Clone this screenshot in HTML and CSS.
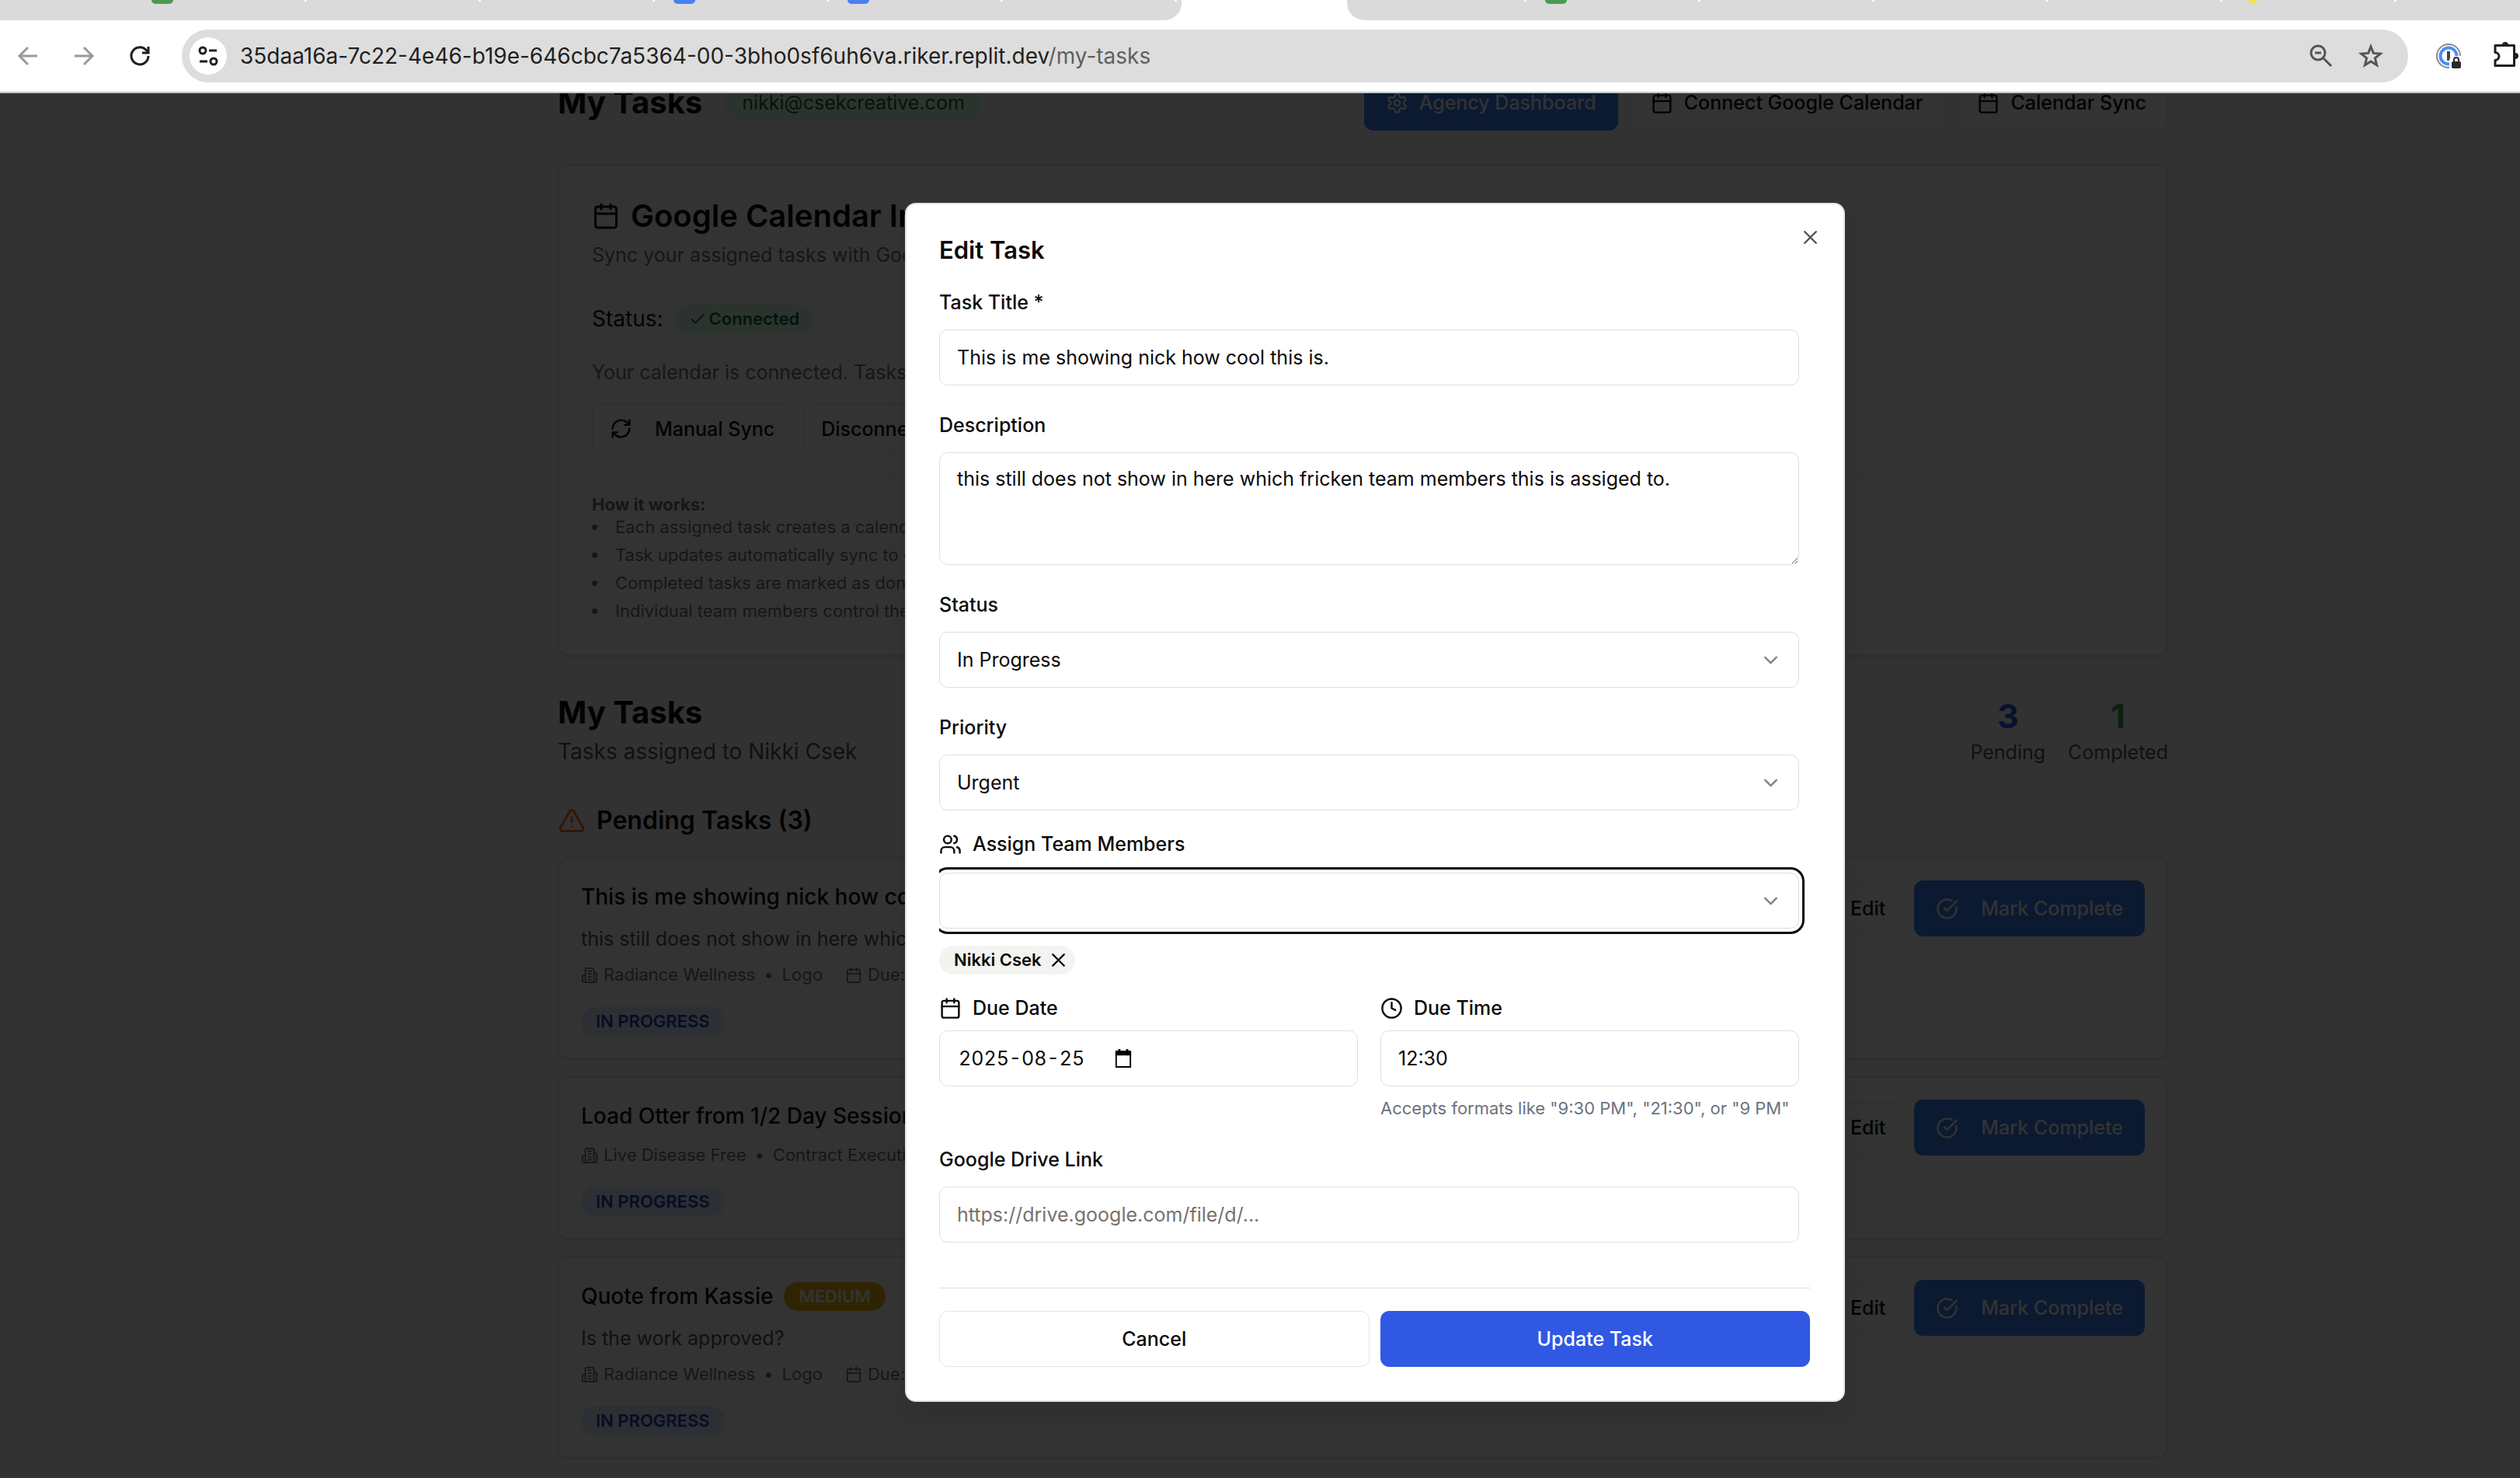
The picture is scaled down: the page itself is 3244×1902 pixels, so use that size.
FILE: index.html
```html
<!DOCTYPE html>
<html lang="en">
<head>
<meta charset="utf-8">
<title>My Tasks</title>
<link rel="stylesheet" href="styles.css">
</head>
<body>
<svg class="sprite" aria-hidden="true">
  <symbol id="calendar" viewBox="0 0 24 24"><path d="M8 2v4M16 2v4M3 10h18"/><rect x="3" y="4" width="18" height="18" rx="2"/></symbol>
  <symbol id="gear" viewBox="0 0 24 24"><path d="M12.22 2h-.44a2 2 0 0 0-2 2v.18a2 2 0 0 1-1 1.73l-.43.25a2 2 0 0 1-2 0l-.15-.08a2 2 0 0 0-2.73.73l-.22.38a2 2 0 0 0 .73 2.73l.15.1a2 2 0 0 1 1 1.72v.51a2 2 0 0 1-1 1.74l-.15.09a2 2 0 0 0-.73 2.73l.22.38a2 2 0 0 0 2.73.73l.15-.08a2 2 0 0 1 2 0l.43.25a2 2 0 0 1 1 1.73V20a2 2 0 0 0 2 2h.44a2 2 0 0 0 2-2v-.18a2 2 0 0 1 1-1.73l.43-.25a2 2 0 0 1 2 0l.15.08a2 2 0 0 0 2.73-.73l.22-.39a2 2 0 0 0-.73-2.73l-.15-.08a2 2 0 0 1-1-1.74v-.5a2 2 0 0 1 1-1.74l.15-.09a2 2 0 0 0 .73-2.73l-.22-.38a2 2 0 0 0-2.73-.73l-.15.08a2 2 0 0 1-2 0l-.43-.25a2 2 0 0 1-1-1.73V4a2 2 0 0 0-2-2z"/><circle cx="12" cy="12" r="3"/></symbol>
  <symbol id="check" viewBox="0 0 24 24"><path d="M20 6 9 17l-5-5"/></symbol>
  <symbol id="refresh" viewBox="0 0 24 24"><path d="M3 12a9 9 0 0 1 9-9 9.75 9.75 0 0 1 6.74 2.74L21 8M21 3v5h-5M21 12a9 9 0 0 1-9 9 9.75 9.75 0 0 1-6.74-2.74L3 16M8 16H3v5"/></symbol>
  <symbol id="alert" viewBox="0 0 24 24"><path d="m21.73 18-8-14a2 2 0 0 0-3.48 0l-8 14A2 2 0 0 0 4 21h16a2 2 0 0 0 1.73-3M12 9v4M12 17h.01"/></symbol>
  <symbol id="building" viewBox="0 0 24 24"><path d="M6 22V4a2 2 0 0 1 2-2h8a2 2 0 0 1 2 2v18ZM6 12H4a2 2 0 0 0-2 2v6a2 2 0 0 0 2 2h2M18 9h2a2 2 0 0 1 2 2v9a2 2 0 0 1-2 2h-2M10 6h4M10 10h4M10 14h4M10 18h4"/></symbol>
  <symbol id="circle-check" viewBox="0 0 24 24"><path d="M21.801 10A10 10 0 1 1 17 3.335"/><path d="m9 11 3 3L22 4"/></symbol>
  <symbol id="close" viewBox="0 0 24 24"><path d="M18 6 6 18M6 6l12 12"/></symbol>
  <symbol id="chevron" viewBox="0 0 24 24"><path d="m6 9 6 6 6-6"/></symbol>
  <symbol id="users" viewBox="0 0 24 24"><path d="M16 21v-2a4 4 0 0 0-4-4H6a4 4 0 0 0-4 4v2"/><circle cx="9" cy="7" r="4"/><path d="M22 21v-2a4 4 0 0 0-3-3.87M16 3.13a4 4 0 0 1 0 7.75"/></symbol>
  <symbol id="clock" viewBox="0 0 24 24"><circle cx="12" cy="12" r="10"/><path d="M12 6v6l4 2"/></symbol>
</svg>

<header class="browser">
  <div class="tabs">
    <div class="tab-group tab-group-left">
      <span class="fav fav-green"></span><span class="fav"></span><span class="fav"></span><span class="fav fav-blue"></span><span class="fav fav-blue"></span><span class="fav"></span>
    </div>
    <div class="tab-active"></div>
    <div class="tab-group tab-group-right">
      <span class="fav"></span><span class="fav fav-green"></span><span class="fav"></span><span class="fav"></span><span class="fav"></span><span class="fav fav-yellow"></span><span class="fav"></span>
    </div>
  </div>
  <nav class="toolbar" aria-label="Browser">
    <button class="tool tool-muted" type="button" aria-label="Back"><svg class="tool-icon" viewBox="0 0 32 32"><path d="M28 16H5M16 5 5 16l11 11"/></svg></button>
    <button class="tool tool-muted" type="button" aria-label="Forward"><svg class="tool-icon" viewBox="0 0 32 32"><path d="M4 16h23M16 5l11 11-11 11"/></svg></button>
    <button class="tool" type="button" aria-label="Reload"><svg class="tool-icon" viewBox="0 0 32 32"><path d="M27 16a11 11 0 1 1-3-7.700L27 11M27 4v8h-8"/></svg></button>
    <div class="address">
      <button class="site-info" type="button" aria-label="Site information"><svg class="tool-icon" viewBox="0 0 32 32"><circle cx="9" cy="9" r="4"/><path d="M17 9h10M5 23h10"/><circle cx="23" cy="23" r="4"/></svg></button>
      <span class="url">35daa16a-7c22-4e46-b19e-646cbc7a5364-00-3bho0sf6uh6va.riker.replit.dev<span class="path">/my-tasks</span></span>
      <button class="tool tool-grey" type="button" aria-label="Zoom"><svg class="tool-icon" viewBox="0 0 32 32"><circle cx="12" cy="12" r="9"/><path d="m19 19 10 10M8 12h8"/></svg></button>
      <button class="tool tool-grey" type="button" aria-label="Bookmark"><svg class="tool-icon" viewBox="0 0 32 32"><path d="m16 4 3.300 8.400 9 .7-6.900 5.800 2.200 8.800-7.600-4.800-7.600 4.800 2.200-8.800-6.900-5.800 9-.7z"/></svg></button>
    </div>
    <button class="tool tool-ext" type="button" aria-label="Password manager"><svg class="ext-icon" viewBox="0 0 36 36"><circle cx="18" cy="18" r="15" fill="#fff" stroke="#8b8b8b" stroke-width="2"/><circle cx="18" cy="18" r="10.500" fill="none" stroke="#4a90f5" stroke-width="4"/><path d="M18 12v12" stroke="#444" stroke-width="4"/><path d="M19 36V24a6 6 0 0 1 6-6h11v18z" fill="#fff"/><rect x="22" y="25" width="12" height="9" rx="2" fill="#2a2a2a"/><path d="M25 26v-3a3 3 0 0 1 6 0v3" fill="none" stroke="#2a2a2a" stroke-width="2"/></svg></button>
    <button class="tool tool-ext tool-cut" type="button" aria-label="Extensions"><svg class="ext-icon" viewBox="0 0 36 36"><path d="M4 4.500h24.500v26H4v-7a5 5 0 0 0 0-10z" fill="none" stroke="#1f1f1f" stroke-width="3" stroke-linejoin="round"/><path d="M13 4a4 4 0 0 1 8 0zM30 14a4 4 0 0 1 0 8z" fill="#1f1f1f"/></svg></button>
  </nav>
</header>

<div class="viewport">
  <main class="page">
    <div class="container">
      <div class="page-head">
        <h1 class="heading">My Tasks</h1>
        <span class="email">nikki@csekcreative.com</span>
        <div class="head-actions">
          <button class="btn btn-blue" type="button"><svg class="icon"><use href="#gear"/></svg>Agency Dashboard</button>
          <button class="btn" type="button"><svg class="icon"><use href="#calendar"/></svg>Connect Google Calendar</button>
          <button class="btn" type="button"><svg class="icon"><use href="#calendar"/></svg>Calendar Sync</button>
        </div>
      </div>

      <section class="card sync">
        <h2 class="sync-title"><svg class="icon icon-lg"><use href="#calendar"/></svg>Google Calendar Integration</h2>
        <p class="muted sync-sub">Sync your assigned tasks with Google Calendar</p>
        <div class="status">Status: <span class="badge badge-green"><svg class="icon icon-sm"><use href="#check"/></svg>Connected</span></div>
        <p class="muted sync-note">Your calendar is connected. Tasks sync automatically.</p>
        <div class="sync-actions">
          <button class="btn btn-sm btn-wide" type="button"><svg class="icon"><use href="#refresh"/></svg>Manual Sync</button>
          <button class="btn btn-sm" type="button">Disconnect</button>
        </div>
        <div class="how">
          <p class="how-title">How it works:</p>
          <ul class="how-list">
            <li>Each assigned task creates a calendar event</li>
            <li>Task updates automatically sync to calendar</li>
            <li>Completed tasks are marked as done</li>
            <li>Individual team members control their sync</li>
          </ul>
        </div>
      </section>

      <div class="summary">
        <div>
          <h2 class="heading">My Tasks</h2>
          <p class="summary-sub">Tasks assigned to Nikki Csek</p>
        </div>
        <div class="stats">
          <div class="stat"><strong class="stat-num stat-blue">3</strong><span>Pending</span></div>
          <div class="stat"><strong class="stat-num stat-green">1</strong><span>Completed</span></div>
        </div>
      </div>

      <h3 class="pending"><svg class="icon icon-lg icon-orange"><use href="#alert"/></svg>Pending Tasks (3)</h3>

      <div class="tasks">
        <article class="card task">
          <div class="task-body">
            <h4 class="task-title">This is me showing nick how cool this is.</h4>
            <p class="task-desc">this still does not show in here which fricken team</p>
            <p class="meta"><svg class="icon icon-sm"><use href="#building"/></svg>Radiance Wellness<span class="dot">•</span>Logo<svg class="icon icon-sm meta-due"><use href="#calendar"/></svg>Due:</p>
            <span class="badge badge-blue">IN PROGRESS</span>
          </div>
          <div class="task-actions">
            <button class="btn btn-sm" type="button">Edit</button>
            <button class="btn btn-blue btn-wide" type="button"><svg class="icon"><use href="#circle-check"/></svg>Mark Complete</button>
          </div>
        </article>
        <article class="card task">
          <div class="task-body">
            <h4 class="task-title">Load Otter from 1/2 Day Session</h4>
            <p class="meta"><svg class="icon icon-sm"><use href="#building"/></svg>Live Disease Free<span class="dot">•</span>Contract Execution</p>
            <span class="badge badge-blue">IN PROGRESS</span>
          </div>
          <div class="task-actions">
            <button class="btn btn-sm" type="button">Edit</button>
            <button class="btn btn-blue btn-wide" type="button"><svg class="icon"><use href="#circle-check"/></svg>Mark Complete</button>
          </div>
        </article>
        <article class="card task">
          <div class="task-body">
            <h4 class="task-title">Quote from Kassie<span class="badge badge-yellow">MEDIUM</span></h4>
            <p class="task-desc">Is the work approved?</p>
            <p class="meta"><svg class="icon icon-sm"><use href="#building"/></svg>Radiance Wellness<span class="dot">•</span>Logo<svg class="icon icon-sm meta-due"><use href="#calendar"/></svg>Due:</p>
            <span class="badge badge-blue">IN PROGRESS</span>
          </div>
          <div class="task-actions">
            <button class="btn btn-sm" type="button">Edit</button>
            <button class="btn btn-blue btn-wide" type="button"><svg class="icon"><use href="#circle-check"/></svg>Mark Complete</button>
          </div>
        </article>
      </div>
    </div>
  </main>

  <div class="overlay">
    <div class="modal" role="dialog" aria-labelledby="dialog-title">
      <button class="modal-close" type="button" aria-label="Close"><svg class="icon"><use href="#close"/></svg></button>
      <h2 class="modal-title" id="dialog-title">Edit Task</h2>
      <form class="form">
        <div class="fields">
          <div class="field">
            <label class="label" for="title">Task Title *</label>
            <input class="control" id="title" type="text" value="This is me showing nick how cool this is.">
          </div>
          <div class="field">
            <label class="label" for="desc">Description</label>
            <textarea class="control control-area" id="desc">this still does not show in here which fricken team members this is assiged to.</textarea>
          </div>
          <div class="field">
            <label class="label" for="status">Status</label>
            <div class="picker"><select class="control" id="status"><option>In Progress</option></select><svg class="icon picker-icon"><use href="#chevron"/></svg></div>
          </div>
          <div class="field">
            <label class="label" for="priority">Priority</label>
            <div class="picker"><select class="control" id="priority"><option>Urgent</option></select><svg class="icon picker-icon"><use href="#chevron"/></svg></div>
          </div>
          <div class="field field-team">
            <label class="label label-icon" for="team"><svg class="icon"><use href="#users"/></svg>Assign Team Members</label>
            <div class="picker"><select class="control control-focus" id="team"><option></option></select><svg class="icon picker-icon"><use href="#chevron"/></svg></div>
            <span class="chip">Nikki Csek<button class="chip-remove" type="button" aria-label="Remove Nikki Csek"><svg class="icon"><use href="#close"/></svg></button></span>
          </div>
          <div class="due">
            <div class="field">
              <label class="label label-icon" for="date"><svg class="icon"><use href="#calendar"/></svg>Due Date</label>
              <div class="control date-box"><input class="date-input" id="date" type="text" value="2025-08-25"><button class="date-button" type="button" aria-label="Open calendar"><svg class="date-icon" viewBox="0 0 24 26"><path d="M2 3h20v22H2z" fill="none" stroke="#000" stroke-width="2"/><path d="M1 3h22v6H1zM5 0h3v4H5zM16 0h3v4h-3z"/></svg></button></div>
            </div>
            <div class="field">
              <label class="label label-icon" for="time"><svg class="icon"><use href="#clock"/></svg>Due Time</label>
              <input class="control" id="time" type="text" value="12:30">
              <p class="hint">Accepts formats like "9:30 PM", "21:30", or "9 PM"</p>
            </div>
          </div>
          <div class="field">
            <label class="label" for="drive">Google Drive Link</label>
            <input class="control" id="drive" type="url" placeholder="https://drive.google.com/file/d/...">
          </div>
        </div>
        <div class="modal-foot">
          <button class="btn btn-grow" type="button">Cancel</button>
          <button class="btn btn-primary btn-grow" type="submit">Update Task</button>
        </div>
      </form>
    </div>
  </div>
</div>
</body>
</html>
```
FILE: styles.css
```css
* { box-sizing: border-box; }

body {
  margin: 0;
  height: 100vh;
  display: flex;
  flex-direction: column;
  overflow: hidden;
  background: #fafaf9;
  color: #0c0a09;
  font: 400 25px/36px Inter, "Liberation Sans", sans-serif;
}

h1, h2, h3, h4, p, ul { margin: 0; padding: 0; }
button, input, select, textarea { font: inherit; color: inherit; }
button { cursor: pointer; }

.sprite { display: none; }

.icon {
  width: 29px;
  height: 29px;
  flex: none;
  fill: none;
  stroke: currentColor;
  stroke-width: 2;
  stroke-linecap: round;
  stroke-linejoin: round;
}
.icon-lg { width: 36px; height: 36px; }
.icon-sm { width: 22px; height: 22px; }
.icon-orange { color: #f97316; }

/* Browser frame */
.browser { flex: none; background: #fff; border-bottom: 2px solid #c4c7c5; overflow: hidden; }
.tabs { display: grid; grid-template-columns: minmax(0, 1521fr) minmax(0, 213fr) minmax(0, 1510fr); height: 26px; }
.tab-group { display: flex; background: #dadada; overflow: hidden; }
.tab-group-left { border-bottom-right-radius: 22px; padding-left: 171px; }
.tab-group-right { border-bottom-left-radius: 22px; padding-left: 7px; }
.fav { flex: none; width: 224px; height: 2px; border-right: 3px solid #fff; }
.fav::before { content: ""; display: block; width: 28px; height: 5px; margin-left: 24px; border-radius: 0 0 6px 6px; }
.fav-green::before { background: #4b9a50; }
.fav-blue::before { background: #4a7ff0; }
.fav-yellow::before { width: 10px; margin-left: 34px; background: #f9e04a; }

.toolbar { display: flex; align-items: center; height: 92px; }
.tool, .site-info {
  flex: none;
  display: grid;
  place-items: center;
  padding: 0;
  border: 0;
  background: none;
  color: #1f1f1f;
}
.tool { width: 72px; height: 40px; }
.tool-muted { color: #9a9a9a; }
.tool-grey { width: 64px; color: #555; }
.tool-icon { width: 32px; height: 32px; fill: none; stroke: currentColor; stroke-width: 3; }
.tool-ext { width: 74px; }
.tool-cut { margin-right: -19px; }
.ext-icon { width: 36px; height: 36px; }
.address {
  flex: 1;
  display: flex;
  align-items: center;
  height: 68px;
  margin: 0 15px 0 18px;
  padding: 0 16px 0 10px;
  border-radius: 34px;
  background: #ddd;
}
.site-info { width: 48px; height: 48px; border-radius: 50%; background: #fff; }
.url { flex: 1; padding-left: 17px; font-size: 28px; color: #1f1f1f; white-space: nowrap; overflow: hidden; }
.path { color: #5f5f5f; }

/* Page behind the dialog */
.viewport { position: relative; flex: 1; min-height: 0; overflow: hidden; }
.page { display: grid; grid-template-columns: minmax(0, 718fr) minmax(0, 2073px) minmax(0, 453fr); }
.container { grid-column: 2; margin-top: -24px; }

.btn {
  display: inline-flex;
  align-items: center;
  justify-content: center;
  gap: 14px;
  height: 72px;
  padding: 0 27px;
  border: 1px solid #e7e5e4;
  border-radius: 11px;
  background: #fff;
  font-weight: 500;
  white-space: nowrap;
}
.btn-sm { height: 65px; padding: 0 22px; }
.btn-wide { gap: 29px; }
.btn-blue { border-color: #3b82f6; background: #3b82f6; color: #fafaf9; }
.btn-primary { border-color: #3058e3; background: #3058e3; color: #fff; }
.btn-grow { flex: 1; }

.card { border: 2px solid #e7e5e4; border-radius: 14px; background: #fff; box-shadow: 0 2px 4px rgba(0, 0, 0, .05); }
.heading { font-size: 40px; line-height: 58px; font-weight: 700; }
.muted { color: #78716c; }

.badge {
  display: inline-flex;
  align-items: center;
  height: 37px;
  padding: 0 19px;
  border-radius: 19px;
  font-size: 22px;
  line-height: 29px;
  font-weight: 600;
}
.badge-green { gap: 4px; background: #dcfce7; color: #166534; }
.badge-blue { background: #dbeafe; color: #1e40af; }
.badge-yellow { background: #eab308; color: #fff; }

.page-head { display: flex; align-items: center; height: 72px; }
.email { margin-left: 29px; padding: 7px 22px; border-radius: 25px; background: #dcfce7; color: #166534; }
.head-actions { display: flex; gap: 14px; margin-left: auto; }

.sync { margin-top: 43px; padding: 43px 42px 42px; }
.sync-title { display: flex; align-items: center; gap: 14px; font-size: 40px; line-height: 43px; font-weight: 600; }
.sync-sub { margin-top: 11px; }
.status { display: flex; align-items: center; gap: 14px; margin-top: 43px; font-size: 28px; line-height: 43px; }
.sync-note { margin-top: 29px; }
.sync-actions { display: flex; gap: 14px; margin-top: 22px; }
.how { margin-top: 28px; padding-top: 22px; border-top: 1px solid #e7e5e4; color: #78716c; font-size: 22px; line-height: 29px; }
.how-title { font-weight: 700; }
.how-list { display: grid; gap: 7px; list-style-position: inside; }

.summary { display: flex; justify-content: space-between; align-items: center; margin-top: 43px; }
.summary-sub { font-size: 28px; line-height: 43px; color: #4b5563; }
.stats { display: flex; gap: 29px; }
.stat { display: flex; flex-direction: column; align-items: center; color: #4b5563; }
.stat-num { font-size: 43px; line-height: 58px; }
.stat-blue { color: #3058e3; }
.stat-green { color: #40a052; }

.pending { display: flex; align-items: center; gap: 14px; margin-top: 42px; font-size: 32px; line-height: 50px; font-weight: 600; }
.tasks { display: grid; gap: 22px; margin-top: 22px; }
.task { display: flex; justify-content: space-between; align-items: flex-start; padding: 28px; }
.task-title { display: flex; align-items: center; gap: 14px; font-size: 28px; line-height: 43px; font-weight: 500; }
.task-desc { margin-top: 14px; color: #4b5563; }
.meta { display: flex; align-items: center; gap: 7px; margin: 14px 0 27px; font-size: 22px; line-height: 29px; color: #6b7280; }
.meta .dot { margin: 0 4px; }
.meta-due { margin-left: 22px; }
.task-body .badge { vertical-align: top; }
.task-actions { display: flex; align-items: center; gap: 14px; }

/* Dialog */
.overlay {
  position: absolute;
  inset: 0;
  display: grid;
  grid-template-columns: minmax(0, 1165fr) minmax(0, 1210px) minmax(0, 869fr);
  align-content: start;
  padding-top: 141px;
  background: rgba(0, 0, 0, .8);
}
.modal {
  position: relative;
  grid-column: 2;
  padding: 43px 43px 43px 42px;
  border: 2px solid #e7e5e4;
  border-radius: 14px;
  background: #fff;
  box-shadow: 0 18px 27px -5px rgba(0, 0, 0, .1);
}
.modal-close {
  position: absolute;
  top: 28px;
  right: 28px;
  display: grid;
  padding: 0;
  border: 0;
  background: none;
  opacity: .7;
}
.modal-title { font-size: 31px; line-height: 32px; font-weight: 600; }
.form { margin-top: 29px; }
.fields { display: grid; gap: 29px; padding-right: 14px; }
.field { display: grid; gap: 14px; align-content: start; justify-items: start; }
.field-team { gap: 22px; }
.label { padding-top: 2px; line-height: 41px; font-weight: 500; }
.label-icon { display: flex; align-items: center; gap: 14px; padding: 0; line-height: 29px; }
.control {
  display: block;
  width: 100%;
  height: 72px;
  padding: 0 22px;
  border: 1px solid #dfdfdf;
  border-radius: 11px;
  outline: 0;
  background: #fff;
  appearance: none;
}
.control::placeholder { color: #78716c; opacity: 1; }
.control-area { height: 145px; padding: 15px 22px; resize: vertical; }
.control-focus { box-shadow: 0 0 0 4px #fff, 0 0 0 7px #0c0a09; clip-path: inset(-8px -8px -8px 0); }
.picker { display: grid; width: 100%; align-items: center; }
.picker > * { grid-area: 1 / 1; }
.picker-icon { justify-self: end; margin-right: 22px; opacity: .5; pointer-events: none; }
.chip {
  display: inline-flex;
  align-items: center;
  gap: 7px;
  height: 37px;
  padding: 0 7px 0 19px;
  border-radius: 19px;
  background: #f3f3f1;
  font-size: 22px;
  line-height: 29px;
  font-weight: 600;
}
.chip-remove { display: grid; padding: 0; border: 0; background: none; }
.due { display: grid; grid-template-columns: 1fr 1fr; gap: 29px; }
.date-box { display: flex; align-items: center; }
.date-input { width: 203px; padding: 0 2px; border: 0; outline: 0; background: none; font-variant-numeric: tabular-nums; }
.date-button { display: grid; padding: 0; border: 0; background: none; }
.date-icon { width: 22px; height: 24px; }
.hint { font-size: 22px; line-height: 29px; color: #6b7280; }
.modal-foot { display: flex; gap: 14px; margin-top: 58px; padding-top: 29px; border-top: 1px solid #dedede; }
```
